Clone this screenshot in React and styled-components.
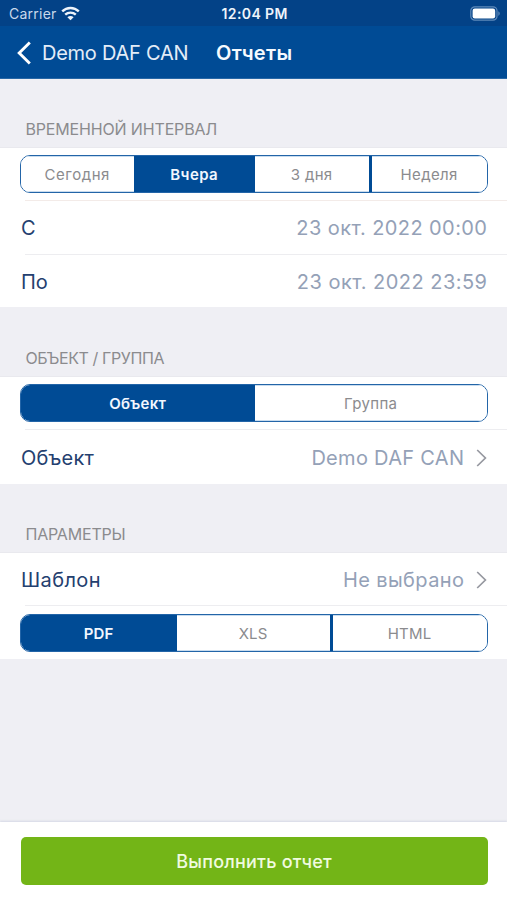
import React from "react";
import styled, { createGlobalStyle } from "styled-components";

const GlobalStyle = createGlobalStyle`
  * { box-sizing: border-box; }
  body { margin: 0; background: #efeff4; }
`;

const Screen = styled.div`
  width: 507px;
  height: 900px;
  display: flex;
  flex-direction: column;
  overflow: hidden;
  background: #efeff4;
  font-family: Inter, "Liberation Sans", sans-serif;
`;

const Text = styled.span`
  font-size: ${(p) => p.$size}px;
  font-weight: ${(p) => p.$weight || 400};
  letter-spacing: ${(p) => p.$track || 0}px;
  margin-right: ${(p) => -(p.$track || 0)}px;
  color: ${(p) => p.$color};
  white-space: nowrap;
`;

const StatusBar = styled.div`
  height: 26px;
  flex: none;
  display: grid;
  grid-template-columns: 1fr auto 1fr;
  align-items: center;
  padding: 0 7px 0 9px;
  background: #034287;
`;

const Carrier = styled.div`
  display: flex;
  align-items: center;
  gap: 5px;
`;

const BatterySlot = styled.div`
  display: flex;
  justify-content: flex-end;
`;

const NavBar = styled.header`
  height: 53px;
  flex: none;
  display: flex;
  align-items: center;
  padding: 1px 0 0 17px;
  background: #004b95;
  border-bottom: 1px solid #2767a6;
`;

const BackButton = styled.div`
  display: flex;
  align-items: center;
  gap: 11px;
  width: 199px;
`;

const SectionTitle = styled.div`
  height: ${(p) => p.$height}px;
  flex: none;
  display: flex;
  align-items: flex-end;
  padding: 0 0 10px 25.5px;
  line-height: 18px;
`;

const Group = styled.section`
  flex: none;
  background: #fff;
  box-shadow: 0 -1px 0 #e9e9ee;
`;

const Cell = styled.div`
  height: ${(p) => p.$height}px;
  display: flex;
  align-items: center;
  justify-content: space-between;
  padding: ${(p) => p.$top}px 20px 0 21px;
`;

const Separator = styled.div`
  height: 1px;
  margin-left: 25px;
  background: ${(p) => p.$color || "#ededf0"};
`;

const Value = styled.div`
  display: flex;
  align-items: center;
  gap: 12px;
`;

const SegmentRow = styled.div`
  height: ${(p) => p.$height}px;
  padding: ${(p) => p.$top}px 19px 0 20px;
`;

const Segments = styled.div`
  height: 38px;
  display: grid;
  grid-template-columns: ${(p) => p.$columns};
  border: 1px solid #2365a8;
  border-radius: 10px;
  overflow: hidden;
`;

const Segment = styled.div`
  display: flex;
  align-items: center;
  justify-content: center;
  padding-right: 1px;
  background: ${(p) => (p.$active ? "#004b95" : "#fff")};
  border-left: ${(p) => (p.$divided ? "3px solid #004b95" : "0")};
  box-shadow: ${(p) => (p.$active ? "none" : "inset 0 1px 0 #c9dcee, inset 0 -1px 0 #c9dcee")};
`;

const Footer = styled.footer`
  height: 78px;
  margin-top: auto;
  flex: none;
  padding: 15px 19.5px 0 20.5px;
  background: #fff;
  box-shadow: 0 -1px 2px #d5d8e5;
`;

const RunButton = styled.div`
  height: 48px;
  display: flex;
  align-items: center;
  justify-content: center;
  border-radius: 5px;
  background: #73b517;
`;

const NAVY = "#24406f";
const MUTED = "#94a1b7";
const GREY = "#8b8b8e";

const WifiIcon = () => (
  <svg width="19" height="15" viewBox="0 0 19 15" fill="none">
    <path d="M1.2 5.4C5.9.8 13.1.8 17.8 5.4" stroke="#eef4fb" strokeWidth="2.4" />
    <path d="M4.2 8.7C7.2 5.9 11.8 5.9 14.8 8.7" stroke="#eef4fb" strokeWidth="2.4" />
    <path d="M9.5 14.3 6.4 11.3C8.2 9.7 10.8 9.7 12.6 11.3Z" fill="#eef4fb" />
  </svg>
);

const BatteryIcon = () => (
  <svg width="30" height="15" viewBox="0 0 30 15" fill="none">
    <rect x="0.8" y="0.8" width="26.2" height="13.4" rx="4" stroke="#5f8aba" strokeWidth="1.2" />
    <rect x="2.6" y="2.6" width="22.6" height="9.8" rx="2.2" fill="#fff" />
    <path d="M28.3 5.2C30.2 6 30.2 9 28.3 9.8Z" fill="#5f8aba" />
  </svg>
);

const BackIcon = () => (
  <svg width="14" height="24" viewBox="0 0 14 24" fill="none">
    <path d="M12.8 1.5 2.2 12 12.8 22.5" stroke="#fff" strokeWidth="2.9" />
  </svg>
);

const Chevron = () => (
  <svg width="11" height="18" viewBox="0 0 11 18" fill="none">
    <path d="M1.2 1 9.4 9 1.2 17" stroke="#9698a0" strokeWidth="1.7" />
  </svg>
);

function SegmentedControl({ height = 52, top, columns, items, active, divided }) {
  return (
    <SegmentRow $height={height} $top={top}>
      <Segments $columns={columns}>
        {items.map(({ label, track }, i) => (
          <Segment key={label} $active={i === active} $divided={i === divided}>
            <Text
              $size={15}
              $weight={i === active ? 600 : 400}
              $track={track}
              $color={i === active ? "#f2f7ff" : GREY}
            >
              {label}
            </Text>
          </Segment>
        ))}
      </Segments>
    </SegmentRow>
  );
}

function Row({ height = 53, top = 0, label, track, value, valueTrack, chevron }) {
  return (
    <Cell $height={height} $top={top}>
      <Text $size={20} $track={track} $color={NAVY}>{label}</Text>
      <Value>
        <Text $size={20} $track={valueTrack} $color={MUTED}>{value}</Text>
        {chevron && <Chevron />}
      </Value>
    </Cell>
  );
}

export default function App() {
  return (
    <Screen>
      <GlobalStyle />
      <StatusBar>
        <Carrier>
          <Text $size={14} $track={0.25} $color="#c9d9eb">Carrier</Text>
          <WifiIcon />
        </Carrier>
        <Text $size={14} $weight={600} $track={0.4} $color="#eef4fb">12:04 PM</Text>
        <BatterySlot><BatteryIcon /></BatterySlot>
      </StatusBar>
      <NavBar>
        <BackButton>
          <BackIcon />
          <Text $size={20} $track={-0.25} $color="#e3edf8">Demo DAF CAN</Text>
        </BackButton>
        <Text $size={20} $weight={600} $track={0.3} $color="#f5faff">Отчеты</Text>
      </NavBar>

      <SectionTitle $height={69}>
        <Text $size={16} $track={-0.16} $color={GREY}>ВРЕМЕННОЙ ИНТЕРВАЛ</Text>
      </SectionTitle>
      <Group>
        <SegmentedControl
          top={7}
          columns="113px 121px 114px 1fr"
          active={1}
          divided={3}
          items={[
            { label: "Сегодня", track: 0.55 },
            { label: "Вчера", track: 0.4 },
            { label: "3 дня", track: 0.3 },
            { label: "Неделя", track: 0.35 },
          ]}
        />
        <Separator $color="#f3ebe8" />
        <Row label="С" value="23 окт. 2022 00:00" valueTrack={0.42} />
        <Separator />
        <Row height={52} top={2} label="По" value="23 окт. 2022 23:59" valueTrack={0.47} />
      </Group>

      <SectionTitle $height={70}>
        <Text $size={16} $track={-0.4} $color={GREY}>ОБЪЕКТ / ГРУППА</Text>
      </SectionTitle>
      <Group>
        <SegmentedControl
          top={7}
          columns="234px 1fr"
          active={0}
          items={[{ label: "Объект", track: 0.25 }, { label: "Группа", track: 0.35 }]}
        />
        <Separator />
        <Row height={54} top={1} label="Объект" track={0.2} value="Demo DAF CAN" valueTrack={0.3} chevron />
      </Group>

      <SectionTitle $height={69}>
        <Text $size={16} $track={-0.2} $color={GREY}>ПАРАМЕТРЫ</Text>
      </SectionTitle>
      <Group>
        <Row height={52} top={2} label="Шаблон" track={0.4} value="Не выбрано" valueTrack={0.4} chevron />
        <Separator />
        <SegmentedControl
          height={53}
          top={8}
          columns="156px 153px 1fr"
          active={0}
          divided={2}
          items={[{ label: "PDF", track: 0.2 }, { label: "XLS", track: 0.2 }, { label: "HTML", track: 0.2 }]}
        />
      </Group>

      <Footer>
        <RunButton>
          <Text $size={18} $weight={500} $track={0.22} $color="#f0fbe0">Выполнить отчет</Text>
        </RunButton>
      </Footer>
    </Screen>
  );
}
